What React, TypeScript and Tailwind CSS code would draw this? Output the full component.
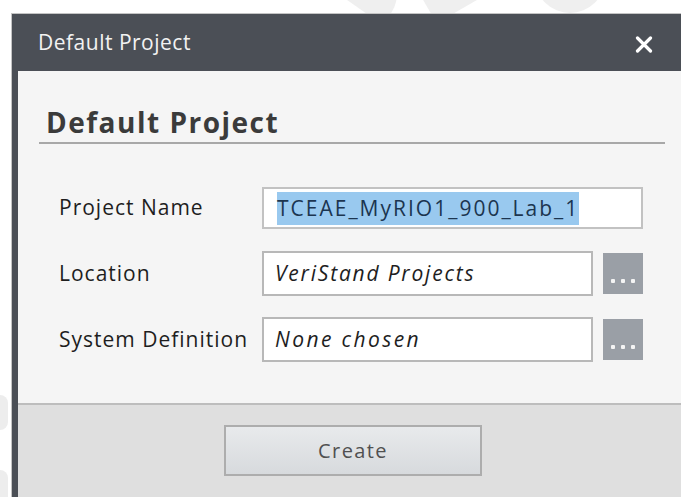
import React from "react";

// "Default Project" dialog: dark title bar, form body and a footer with a Create button

const font = { fontFamily: '"Open Sans", "Noto Sans", Arial, sans-serif' };

function BrowseButton() {
  return (
    <button className="flex h-[41px] w-[40px] items-end justify-center gap-[6px] bg-[#9a9fa6] pb-[11px]">
      <span className="h-[4px] w-[4px] rounded-[1px] bg-[#f4f4f4]" />
      <span className="h-[4px] w-[4px] rounded-[1px] bg-[#f4f4f4]" />
      <span className="h-[4px] w-[4px] rounded-[1px] bg-[#f4f4f4]" />
    </button>
  );
}

export default function App() {
  return (
    <div
      className="relative h-[497px] w-[681px] overflow-hidden bg-white pl-[11px] pt-[13px]"
      style={font}
    >
      {/* faint background marks around the dialog */}
      <div className="absolute left-[345px] top-[-30px] h-[43px] w-[55px] rotate-[35deg] rounded-t-[30px] bg-[#efefef]" />
      <div className="absolute left-[425px] top-[-20px] h-[33px] w-[50px] -rotate-[30deg] bg-[#efefef]" />
      <div className="absolute left-[535px] top-[-30px] h-[43px] w-[70px] rounded-b-[35px] bg-[#efefef]" />
      <div className="absolute left-[-20px] top-[395px] h-[35px] w-[28px] rounded-[8px] bg-[#ededed]" />
      <div className="absolute left-[-20px] top-[470px] h-[40px] w-[28px] rounded-[8px] bg-[#ededed]" />

      <div className="relative flex h-full flex-col border-l border-t border-[#c4c4c4] bg-[#4b4f56]">
        {/* title bar */}
        <div className="flex h-[57px] shrink-0 items-center justify-between pl-[26px] pr-[28px]">
          <span className="text-[21px] tracking-[0.5px] text-[#f2f2f2]">Default Project</span>
          <svg width="18" height="17" viewBox="0 0 18 17" className="mt-[3px] text-white">
            <path d="M2.5 2 L15.5 15 M15.5 2 L2.5 15" stroke="currentColor" strokeWidth="3.2" strokeLinecap="round" />
          </svg>
        </div>

        <div className="flex flex-1 pl-[6px]">
          <div className="flex flex-1 flex-col">
            {/* form body */}
            <div className="h-[332px] bg-[#f5f5f5] pl-[21px] pr-[16px]">
              <div className="border-b-2 border-[#a8a8a8] pb-[4px] pl-[7px] pt-[35px]">
                <h1 className="text-[28px] font-bold leading-[32px] tracking-[1.5px] text-[#3b3b3b]">
                  Default Project
                </h1>
              </div>

              <div className="mt-[43px] flex flex-col pl-[20px] text-[21px] tracking-[1px] text-[#1e1e1e]">
                <div className="flex items-center">
                  <span className="w-[203px]">Project Name</span>
                  <div className="flex h-[42px] w-[381px] items-center border-2 border-[#c2c2c2] bg-white pl-[13px]">
                    <span className="bg-[#99c9ef] text-[21px] leading-[33px] tracking-[2px] text-[#1c3550]">
                      TCEAE_MyRIO1_900_Lab_1
                    </span>
                  </div>
                </div>
                <div className="mt-[22px] flex items-center">
                  <span className="w-[203px]">Location</span>
                  <div className="flex h-[45px] w-[331px] items-center border-2 border-[#b8b8b8] bg-white pl-[11px]">
                    <span className="text-[21px] italic tracking-[1.8px] text-[#1e1e1e]">VeriStand Projects</span>
                  </div>
                  <div className="ml-[10px]">
                    <BrowseButton />
                  </div>
                </div>
                <div className="mt-[21px] flex items-center">
                  <span className="w-[203px]">System Definition</span>
                  <div className="flex h-[45px] w-[331px] items-center border-2 border-[#b8b8b8] bg-white pl-[11px]">
                    <span className="text-[21px] italic tracking-[2.4px] text-[#1e1e1e]">None chosen</span>
                  </div>
                  <div className="ml-[10px]">
                    <BrowseButton />
                  </div>
                </div>
              </div>
            </div>

            {/* footer */}
            <div className="flex-1 border-t-2 border-[#bdbdbd] bg-[#dfdfdf] pl-[206px] pt-[20px]">
              <button className="h-[51px] w-[258px] border-2 border-[#adadad] bg-gradient-to-b from-[#e8eaec] to-[#d7dadd] text-[20px] tracking-[1.4px] text-[#505050]">
                Create
              </button>
            </div>
          </div>
        </div>
      </div>
    </div>
  );
}
